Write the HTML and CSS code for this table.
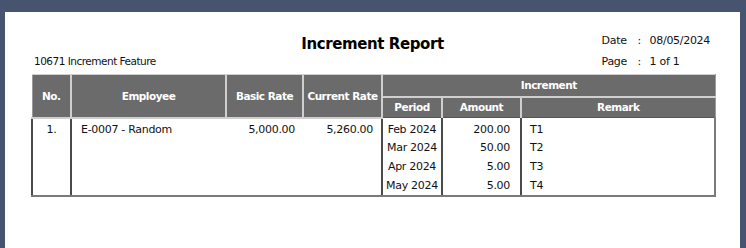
FILE: index.html
```html
<!DOCTYPE html>
<html>
<head>
<meta charset="utf-8">
<link rel="stylesheet" href="styles.css">
</head>
<body>
<div class="page">
  <div class="head">
    <div class="subtitle">10671 Increment Feature</div>
    <h1 class="title">Increment Report</h1>
    <div class="meta">
      <span>Date</span><span>:</span><span>08/05/2024</span>
      <span>Page</span><span>:</span><span>1 of 1</span>
    </div>
  </div>
  <table class="report">
    <colgroup>
      <col class="c-no"><col class="c-emp"><col class="c-basic"><col class="c-cur"><col class="c-period"><col class="c-amt"><col class="c-rem">
    </colgroup>
    <thead>
      <tr class="h1">
        <th rowspan="2">No.</th>
        <th rowspan="2">Employee</th>
        <th rowspan="2">Basic Rate</th>
        <th rowspan="2">Current Rate</th>
        <th colspan="3">Increment</th>
      </tr>
      <tr class="h2">
        <th>Period</th>
        <th>Amount</th>
        <th>Remark</th>
      </tr>
    </thead>
    <tbody>
      <tr class="first">
        <td rowspan="4" class="no">1.</td>
        <td rowspan="4" class="emp">E-0007 - Random</td>
        <td rowspan="4" class="num basic">5,000.00</td>
        <td rowspan="4" class="num cur">5,260.00</td>
        <td class="period">Feb 2024</td>
        <td class="amt">200.00</td>
        <td class="rem">T1</td>
      </tr>
      <tr><td class="period">Mar 2024</td><td class="amt">50.00</td><td class="rem">T2</td></tr>
      <tr><td class="period">Apr 2024</td><td class="amt">5.00</td><td class="rem">T3</td></tr>
      <tr class="last"><td class="period">May 2024</td><td class="amt">5.00</td><td class="rem">T4</td></tr>
    </tbody>
  </table>
</div>
</body>
</html>
```
FILE: styles.css
```css
html, body {
  margin: 0;
  padding: 0;
}
body {
  background: #46546f;
  font-family: "DejaVu Sans", Verdana, sans-serif;
  font-size: 11px;
  letter-spacing: -0.3px;
  color: #111;
}
.page {
  background: #fff;
  margin: 12px 6px 0 5px;
  height: 236px;
  padding: 18px 26px 0 26px;
  box-sizing: border-box;
}
.head {
  display: grid;
  grid-template-columns: 1fr auto 1fr;
  align-items: start;
  margin-bottom: 2px;
}
.subtitle {
  align-self: end;
  line-height: 21px;
  padding-left: 3px;
  font-size: 10.5px;
  letter-spacing: -0.5px;
}
.title {
  margin: 0;
  font-size: 15px;
  font-weight: bold;
  line-height: 28px;
  letter-spacing: -0.4px;
  color: #000;
}
.meta {
  justify-self: end;
  display: grid;
  grid-template-columns: 36px 12px auto;
  line-height: 21px;
  padding-right: 4px;
}
.report {
  border-collapse: collapse;
  table-layout: fixed;
  width: 683px;
}
.c-no { width: 39px; }
.c-emp { width: 155px; }
.c-basic { width: 77px; }
.c-cur { width: 79px; }
.c-period { width: 60px; }
.c-amt { width: 79px; }
.c-rem { width: 194px; }
.report th {
  background: #6b6b6b;
  color: #fff;
  font-weight: bold;
  font-size: 10.5px;
  letter-spacing: -0.5px;
  border: 2px solid #cfcfcf;
  padding: 0;
  text-align: center;
}
.report thead tr.h1 th { border-top-width: 1px; }
.report thead tr.h1 th:first-child { border-left: 1px solid #9a9a9a; }
.report thead tr th:last-child { border-right: 1px solid #9a9a9a; }
.report tr.h1 { height: 22px; }
.report tr.h2 { height: 21px; }
.report tr.h2 th { border-bottom: 1px solid #555; }
.report td {
  padding: 0;
  height: 19px;
  border-left: 2px solid #4a4a4a;
  border-right: 2px solid #4a4a4a;
  vertical-align: middle;
}
.report tr.first td { padding-top: 2px; height: 18px; }
.report tr.first td[rowspan] { vertical-align: top; padding-top: 4px; }
.report td.no { text-align: center; }
.report td.emp { padding-left: 9px; border-right: hidden; }
.report td.num { text-align: right; padding-right: 8px; }
.report td.basic { border-left: hidden; border-right: hidden; }
.report td.cur { border-left: hidden; }
.report td.period { text-align: center; }
.report td.amt { text-align: right; padding-right: 10px; }
.report td.rem { padding-left: 8px; border-right: 2px solid #7a7a7a; }
.report tbody tr.last td,
.report td[rowspan] { border-bottom: 2px solid #7a7a7a; }
```
